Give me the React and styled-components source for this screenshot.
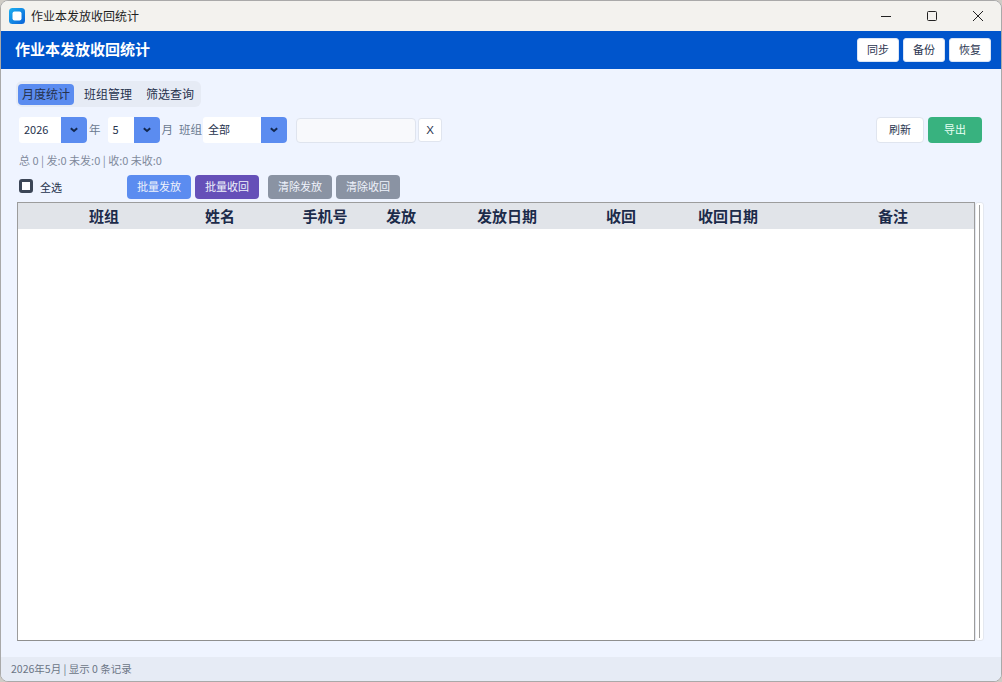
import React from "react";
import styled, { createGlobalStyle } from "styled-components";

const Global = createGlobalStyle`
  html, body { margin: 0; padding: 0; height: 682px; overflow: hidden; background: #cfccc6; }
  * { box-sizing: border-box; }
  body { font-family: "Noto Sans CJK SC", "Noto Sans", sans-serif; font-size: 12px; }
`;
const Win = styled.div`
  width: 1002px; height: 682px; display: flex; flex-direction: column;
  border: 1px solid #a9a9a9; border-radius: 8px; overflow: hidden; background: #eff4ff;
`;
const TitleBar = styled.div`
  height: 30px; flex: none; display: flex; align-items: center; background: #f3f2ee; padding-left: 8px;
`;
const AppIcon = styled.svg` width: 16px; height: 16px; flex: none; `;
const WinTitle = styled.span` margin-left: 6px; font-size: 12px; color: #1f1f1f; line-height: 16px; `;
const WinControls = styled.div` margin-left: auto; display: flex; height: 100%; `;
const WinBtn = styled.div` width: 46px; display: flex; align-items: center; justify-content: center; `;
const Header = styled.header`
  height: 38px; flex: none; background: #0055cc; display: flex; align-items: center;
  justify-content: space-between; padding: 0 10px 0 14px;
`;
const HeaderTitle = styled.h1` margin: 0 0 3px; font-size: 15px; font-weight: 700; color: #fff; line-height: 20px; `;
const HeaderActions = styled.div` display: flex; gap: 4px; `;
const HeaderBtn = styled.button`
  width: 42px; height: 24px; padding: 0 0 2px; background: #fff; border: 1px solid #dbe5f5; border-radius: 3px;
  font: 11px "Noto Sans CJK SC", sans-serif; color: #2a3550;
`;
const Main = styled.main`
  flex: 1; min-height: 0; display: flex; flex-direction: column; padding: 12px 17px 16px 15px;
`;
const Tabs = styled.nav`
  align-self: flex-start; display: flex; height: 26px; align-items: center; gap: 4px;
  padding: 0 2px 0 2px; background: #e6ebf5; border-radius: 6px;
`;
const Tab = styled.div`
  width: ${p => (p.$active ? "56px" : "58px")}; height: 21px; line-height: 19px; text-align: center; border-radius: 4px;
  margin-right: ${p => (p.$active ? "1px" : "0")};
  font-size: 12px; color: #26324d; background: ${p => (p.$active ? "#5b8cf0" : "transparent")};
`;
const Toolbar = styled.div`
  display: flex; align-items: center; margin-top: 10px; height: 26px; padding: 0 2px 0 3px;
`;
const Select = styled.div`
  width: ${p => p.$w}px; height: 26px; display: flex; background: #fff; border-radius: 3px 4px 4px 3px; overflow: hidden; flex: none;
`;
const SelectValue = styled.span` flex: 1; padding-left: 5px; font-size: 11px; line-height: 24px; color: #26324d; `;
const SelectArrow = styled.span`
  width: 26px; background: #5b8cf0; display: flex; align-items: center; justify-content: center;
`;
const Unit = styled.span`
  font-size: 11.5px; color: #6b7a90; margin: 0 ${p => p.$mr ?? 7}px 0 ${p => p.$ml ?? 2}px; line-height: 24px; height: 26px; white-space: nowrap;
`;
const SearchInput = styled.div`
  width: 120px; height: 25px; margin-left: 9px; background: #f8f9fc; border: 1px solid #dfe4ee; border-radius: 4px;
`;
const ClearBtn = styled.button`
  width: 24px; height: 24px; margin-left: 2px; padding: 0 0 1px; background: #fff; border: 1px solid #e0e5ef; border-radius: 3px;
  font: 11.5px "Liberation Sans", sans-serif; color: #2a3550;
`;
const Spacer = styled.div` flex: 1; `;
const RefreshBtn = styled.button`
  width: 48px; height: 26px; padding: 0 0 2px; background: #fff; border: 1px solid #e0e5ef; border-radius: 4px;
  font: 11px "Noto Sans CJK SC", sans-serif; color: #2a3550;
`;
const ExportBtn = styled.button`
  width: 54px; height: 26px; margin-left: 4px; padding: 0 0 2px; background: #38b27f; border: none; border-radius: 4px;
  font: 11px "Noto Sans CJK SC", sans-serif; color: #e8fff4;
`;
const Stats = styled.div`
  margin-top: 9px; margin-bottom: 1px; padding-left: 3px; font-size: 11px; line-height: 16px; color: #7f8a9c;
`;
const BatchBar = styled.div`
  margin-top: 6px; height: 24px; display: flex; align-items: center; padding-left: 3px;
`;
const CheckBox = styled.span`
  width: 14px; height: 14px; margin-bottom: 2px; border: 3px solid #3c4656; border-radius: 3px; background: #fff; flex: none;
`;
const CheckLabel = styled.span` margin-left: 7px; width: 87px; font-size: 11px; color: #26324d; line-height: 16px; `;
const Act = styled.button`
  width: 64px; height: 24px; padding: 0 0 3px; border: none; border-radius: 4px; background: ${p => p.$bg};
  font: 11px "Noto Sans CJK SC", sans-serif; color: #eef2fb; margin-left: ${p => p.$ml || 0}px;
`;
const TableArea = styled.div` flex: 1; min-height: 0; display: flex; margin-top: 3px; padding-left: 1px; `;
const Table = styled.div`
  width: 958px; display: flex; flex-direction: column; background: #fff; border: 1px solid #9c9c9c; border-bottom-color: #8f8f8f;
`;
const HeadRow = styled.div`
  display: grid; height: 26px; align-items: center; padding-left: 14px; background: #e1e4e9;
  grid-template-columns: 144px 88px 122px 30px 182px 46px 168px 162px;
`;
const HeadCell = styled.div`
  justify-self: center; font-size: 15px; font-weight: 700; color: #1c2b4a; white-space: nowrap; line-height: 20px; margin-bottom: 1px;
`;
const Scrollbar = styled.div`
  width: 9px; position: relative; background: #fff; border: 1px solid #e4e8f0; border-radius: 3px;
  &::after { content: ""; position: absolute; left: 3px; top: 2px; bottom: 2px; width: 1px; background: #a0a0a0; }
`;
const StatusBar = styled.footer`
  height: 24px; flex: none; background: #e6ebf5; padding-left: 10px; font-size: 10.5px; line-height: 24px; color: #6b7585;
`;

const Chevron = () => (
  <svg width="10" height="6" viewBox="0 0 10 6"><path d="M1.8 1.2 5 3.9l3.2-2.7" fill="none" stroke="#12284f" strokeWidth="2" /></svg>
);
const Dropdown = ({ w, value }) => (
  <Select $w={w}><SelectValue>{value}</SelectValue><SelectArrow><Chevron /></SelectArrow></Select>
);
const cols = ["班组", "姓名", "手机号", "发放", "发放日期", "收回", "收回日期", "备注"];

export default function App() {
  return (
    <>
      <Global />
      <Win>
        <TitleBar>
          <AppIcon viewBox="0 0 16 16">
            <defs><linearGradient id="g" x1="0" y1="0" x2="1" y2="1"><stop offset="0" stopColor="#1cb0f0" /><stop offset="1" stopColor="#0a62d8" /></linearGradient></defs>
            <rect width="16" height="16" rx="3.5" fill="url(#g)" />
            <rect x="3.5" y="3.5" width="9" height="9" rx="2" fill="#fff" />
          </AppIcon>
          <WinTitle>作业本发放收回统计</WinTitle>
          <WinControls>
            <WinBtn><svg width="12" height="12" viewBox="0 0 12 12"><path d="M1 6.5h10" stroke="#222" strokeWidth="1" /></svg></WinBtn>
            <WinBtn><svg width="12" height="12" viewBox="0 0 12 12"><rect x="1.5" y="1.5" width="9" height="9" rx="1" fill="none" stroke="#222" /></svg></WinBtn>
            <WinBtn><svg width="12" height="12" viewBox="0 0 12 12"><path d="M1 1l10 10M11 1 1 11" stroke="#222" strokeWidth="1" /></svg></WinBtn>
          </WinControls>
        </TitleBar>
        <Header>
          <HeaderTitle>作业本发放收回统计</HeaderTitle>
          <HeaderActions>
            <HeaderBtn>同步</HeaderBtn><HeaderBtn>备份</HeaderBtn><HeaderBtn>恢复</HeaderBtn>
          </HeaderActions>
        </Header>
        <Main>
          <Tabs>
            <Tab $active>月度统计</Tab><Tab>班组管理</Tab><Tab>筛选查询</Tab>
          </Tabs>
          <Toolbar>
            <Dropdown w={68} value="2026" />
            <Unit>年</Unit>
            <Dropdown w={52} value="5" />
            <Unit $mr={6}>月</Unit>
            <Unit $ml={0} $mr={1}>班组</Unit>
            <Dropdown w={84} value="全部" />
            <SearchInput />
            <ClearBtn>X</ClearBtn>
            <Spacer />
            <RefreshBtn>刷新</RefreshBtn>
            <ExportBtn>导出</ExportBtn>
          </Toolbar>
          <Stats>总 0 | 发:0 未发:0 | 收:0 未收:0</Stats>
          <BatchBar>
            <CheckBox />
            <CheckLabel>全选</CheckLabel>
            <Act $bg="#5b8cf0">批量发放</Act>
            <Act $bg="#6550b8" $ml={4}>批量收回</Act>
            <Act $bg="#8a93a3" $ml={9}>清除发放</Act>
            <Act $bg="#8a93a3" $ml={4}>清除收回</Act>
          </BatchBar>
          <TableArea>
            <Table>
              <HeadRow>{cols.map(c => <HeadCell key={c}>{c}</HeadCell>)}</HeadRow>
            </Table>
            <Scrollbar />
          </TableArea>
        </Main>
        <StatusBar>2026年5月 | 显示 0 条记录</StatusBar>
      </Win>
    </>
  );
}
